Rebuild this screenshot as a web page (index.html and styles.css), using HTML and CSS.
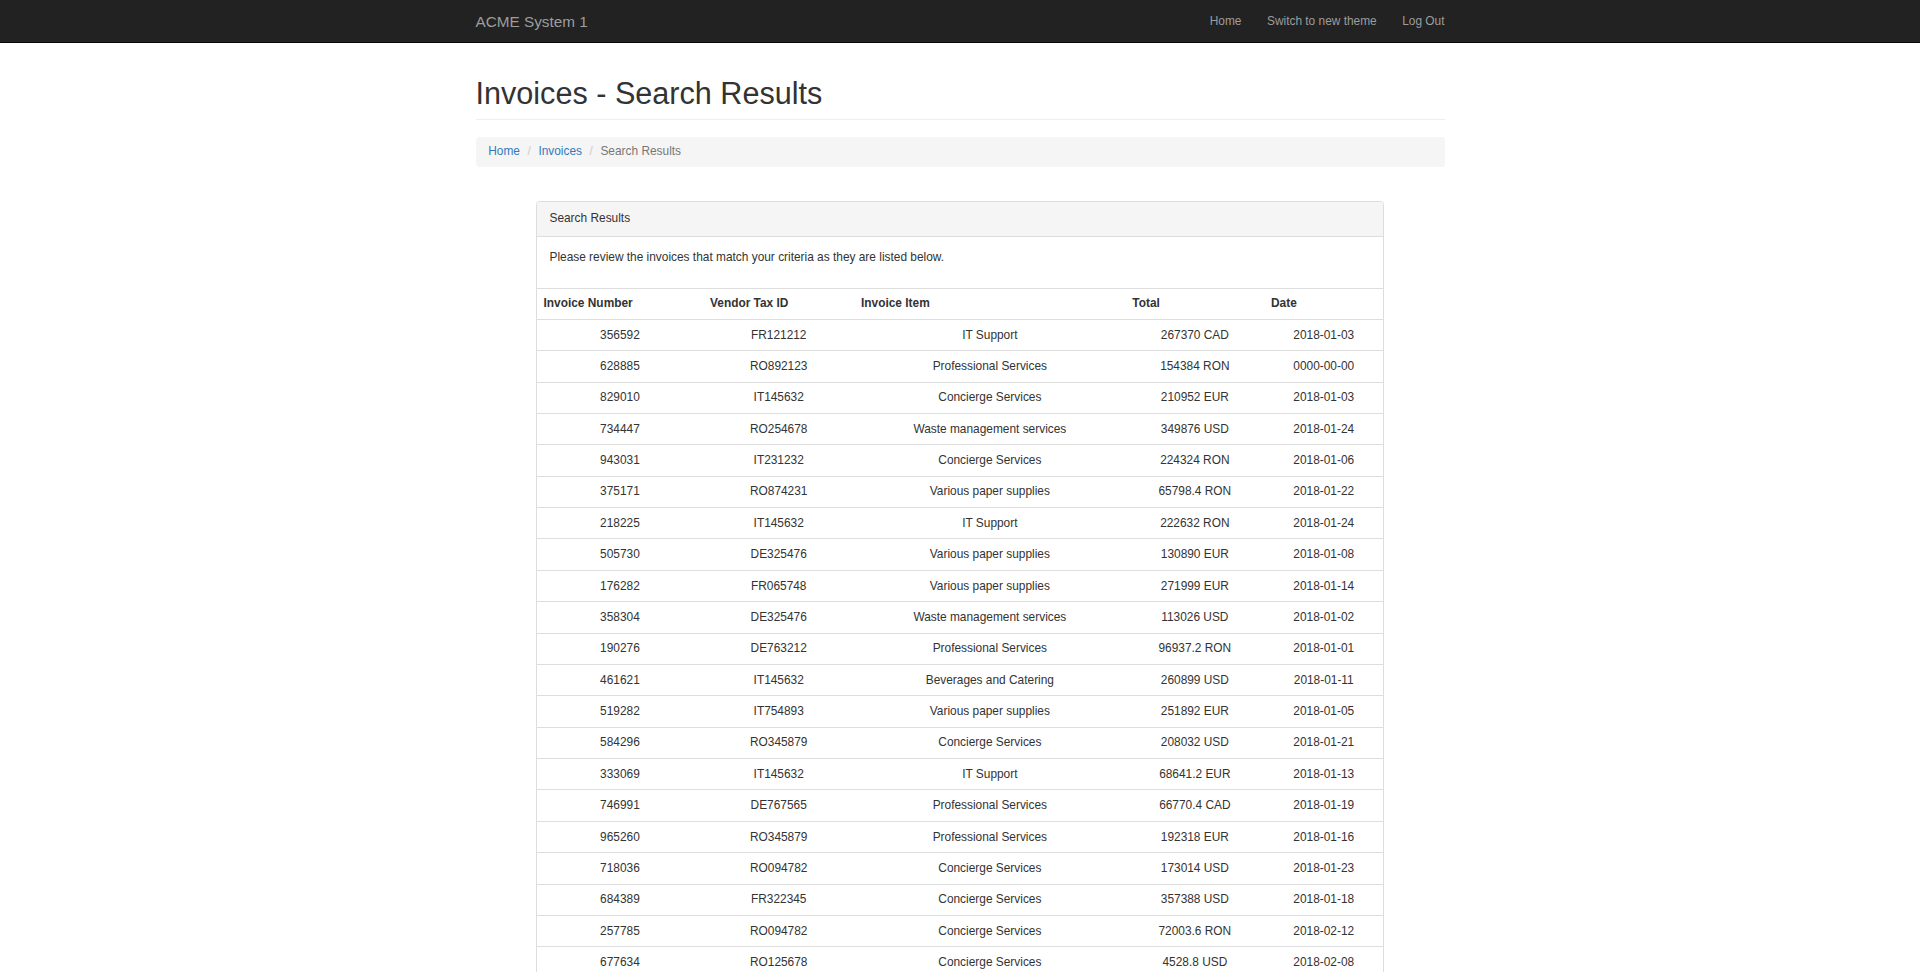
FILE: index.html
```html
<!DOCTYPE html>
<html lang="en">
<head>
<meta charset="utf-8">
<title>Invoices - Search Results</title>
<link rel="stylesheet" href="styles.css">
</head>
<body>
<nav class="navbar">
  <div class="container navbar-inner">
    <a class="brand" href="#">ACME System 1</a>
    <ul class="nav">
      <li><a href="#">Home</a></li>
      <li><a href="#">Switch to new theme</a></li>
      <li><a href="#">Log Out</a></li>
    </ul>
  </div>
</nav>
<div class="container">
  <div class="page-header">
    <h1>Invoices - Search Results</h1>
  </div>
  <ol class="breadcrumb">
    <li><a href="#">Home</a></li>
    <li><a href="#">Invoices</a></li>
    <li class="active">Search Results</li>
  </ol>
  <div class="panel">
    <div class="panel-heading">Search Results</div>
    <div class="panel-body">
      <p>Please review the invoices that match your criteria as they are listed below.</p>
    </div>
    <table class="table">
      <colgroup>
        <col class="c1"><col class="c2"><col class="c3"><col class="c4"><col class="c5">
      </colgroup>
      <thead>
        <tr><th>Invoice Number</th><th>Vendor Tax ID</th><th>Invoice Item</th><th>Total</th><th>Date</th></tr>
      </thead>
      <tbody>
        <tr><td>356592</td><td>FR121212</td><td>IT Support</td><td>267370 CAD</td><td>2018-01-03</td></tr>
        <tr><td>628885</td><td>RO892123</td><td>Professional Services</td><td>154384 RON</td><td>0000-00-00</td></tr>
        <tr><td>829010</td><td>IT145632</td><td>Concierge Services</td><td>210952 EUR</td><td>2018-01-03</td></tr>
        <tr><td>734447</td><td>RO254678</td><td>Waste management services</td><td>349876 USD</td><td>2018-01-24</td></tr>
        <tr><td>943031</td><td>IT231232</td><td>Concierge Services</td><td>224324 RON</td><td>2018-01-06</td></tr>
        <tr><td>375171</td><td>RO874231</td><td>Various paper supplies</td><td>65798.4 RON</td><td>2018-01-22</td></tr>
        <tr><td>218225</td><td>IT145632</td><td>IT Support</td><td>222632 RON</td><td>2018-01-24</td></tr>
        <tr><td>505730</td><td>DE325476</td><td>Various paper supplies</td><td>130890 EUR</td><td>2018-01-08</td></tr>
        <tr><td>176282</td><td>FR065748</td><td>Various paper supplies</td><td>271999 EUR</td><td>2018-01-14</td></tr>
        <tr><td>358304</td><td>DE325476</td><td>Waste management services</td><td>113026 USD</td><td>2018-01-02</td></tr>
        <tr><td>190276</td><td>DE763212</td><td>Professional Services</td><td>96937.2 RON</td><td>2018-01-01</td></tr>
        <tr><td>461621</td><td>IT145632</td><td>Beverages and Catering</td><td>260899 USD</td><td>2018-01-11</td></tr>
        <tr><td>519282</td><td>IT754893</td><td>Various paper supplies</td><td>251892 EUR</td><td>2018-01-05</td></tr>
        <tr><td>584296</td><td>RO345879</td><td>Concierge Services</td><td>208032 USD</td><td>2018-01-21</td></tr>
        <tr><td>333069</td><td>IT145632</td><td>IT Support</td><td>68641.2 EUR</td><td>2018-01-13</td></tr>
        <tr><td>746991</td><td>DE767565</td><td>Professional Services</td><td>66770.4 CAD</td><td>2018-01-19</td></tr>
        <tr><td>965260</td><td>RO345879</td><td>Professional Services</td><td>192318 EUR</td><td>2018-01-16</td></tr>
        <tr><td>718036</td><td>RO094782</td><td>Concierge Services</td><td>173014 USD</td><td>2018-01-23</td></tr>
        <tr><td>684389</td><td>FR322345</td><td>Concierge Services</td><td>357388 USD</td><td>2018-01-18</td></tr>
        <tr><td>257785</td><td>RO094782</td><td>Concierge Services</td><td>72003.6 RON</td><td>2018-02-12</td></tr>
        <tr><td>677634</td><td>RO125678</td><td>Concierge Services</td><td>4528.8 USD</td><td>2018-02-08</td></tr>
      </tbody>
    </table>
  </div>
</div>
</body>
</html>
```

FILE: styles.css
```css
* { box-sizing: border-box; }

html, body {
  margin: 0;
  padding: 0;
}

body {
  font-family: "Liberation Sans", Arial, Helvetica, sans-serif;
  font-size: 11.9px;
  line-height: 17px;
  color: #333333;
  background: #ffffff;
}

a { text-decoration: none; }

.container {
  width: 994.5px;
  margin: 0 auto;
  padding: 0 12.75px;
}

/* Navbar */
.navbar {
  background: #222222;
  border-bottom: 1px solid #080808;
  height: 43.35px;
}

.navbar-inner {
  display: flex;
  justify-content: space-between;
  align-items: flex-start;
}

.brand {
  color: #9d9d9d;
  font-size: 15.3px;
  line-height: 17px;
  padding: 12.75px 0;
  height: 42.5px;
}

.nav {
  list-style: none;
  margin: 0 -12.75px 0 0;
  padding: 0;
  display: flex;
}

.nav a {
  display: block;
  color: #9d9d9d;
  padding: 12.75px;
  line-height: 17px;
}

/* Page header */
.page-header {
  margin: 34px 0 17px;
  padding-bottom: 7.65px;
  border-bottom: 1px solid #eeeeee;
}

.page-header h1 {
  margin: 0;
  font-size: 30.6px;
  line-height: 33.66px;
  font-weight: 500;
  color: #333333;
}

/* Breadcrumb */
.breadcrumb {
  list-style: none;
  margin: 0 0 17px;
  padding: 6.8px 12.75px;
  background: #f5f5f5;
  border-radius: 3.4px;
}

.breadcrumb li {
  display: inline-block;
  color: #777777;
}

.breadcrumb a { color: #337ab7; }

.breadcrumb li + li::before {
  content: "/\00a0";
  color: #cccccc;
  padding: 0 4.25px;
}

/* Panel */
.panel {
  width: 848.6px;
  margin: 33.4px auto 17px;
  border: 1px solid #dddddd;
  border-radius: 3.4px;
  background: #ffffff;
  box-shadow: 0 1px 1px rgba(0, 0, 0, 0.05);
}

.panel-heading {
  background: #f5f5f5;
  border-bottom: 1px solid #dddddd;
  padding: 8.5px 12.75px;
  border-radius: 2.4px 2.4px 0 0;
}

.panel-body {
  padding: 12.75px;
}

.panel-body p {
  margin: 0 0 8.5px;
}

/* Table */
.table {
  width: 100%;
  border-collapse: collapse;
  border-spacing: 0;
  table-layout: fixed;
  border-top: 1px solid #dddddd;
}

.c1 { width: 166.5px; }
.c2 { width: 151px; }
.c3 { width: 271.3px; }
.c4 { width: 138.7px; }
.c5 { width: 119.1px; }

.table th {
  text-align: left;
  font-weight: bold;
  padding: 6.8px 6.8px 6.4px;
  line-height: 17px;
  border-bottom: 1.7px solid #dddddd;
  vertical-align: bottom;
}

.table td {
  text-align: center;
  padding: 6.7px 6.8px;
  line-height: 17px;
  border-top: 1px solid #dddddd;
  vertical-align: top;
}
```
